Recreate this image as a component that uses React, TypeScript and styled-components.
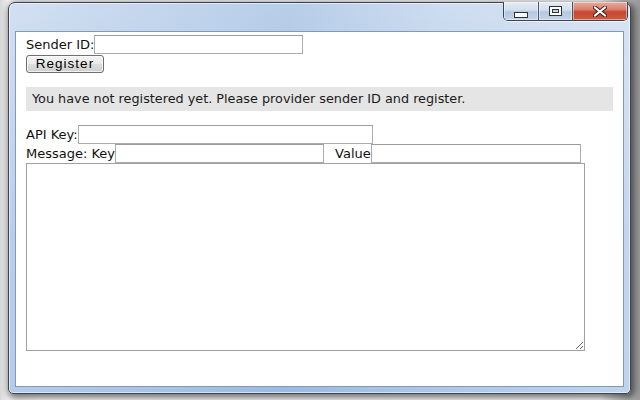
import React from "react";
import styled, { createGlobalStyle } from "styled-components";

const Global = createGlobalStyle`
  html, body { margin: 0; padding: 0; background: #ffffff; }
  body { width: 640px; height: 400px; overflow: hidden; }
`;

const Desktop = styled.div`
  width: 640px;
  height: 400px;
  box-sizing: border-box;
  padding: 2px 0 0 8px;
  background: linear-gradient(90deg, #d8d8d8 0px, #f4f4f4 8px, #ffffff 40px, #ffffff 600px, #9a9a9a 640px);
`;

const Window = styled.div`
  width: 623px;
  height: 392px;
  box-sizing: border-box;
  border: 1px solid #3a4452;
  border-radius: 7px 7px 5px 5px;
  padding: 0 6px 6px;
  display: flex;
  flex-direction: column;
  background:
    linear-gradient(90deg, rgba(255,255,255,0.18) 0%, rgba(120,160,210,0.2) 45%, rgba(255,255,255,0.1) 70%, rgba(255,255,255,0.3) 100%),
    linear-gradient(180deg, #c8d9ee 0%, #b9cfea 30%, #a8c4e7 60%, #a4c1e6 100%);
  box-shadow:
    inset 0 0 0 1px rgba(255, 255, 255, 0.55),
    2px 2px 7px 2px rgba(0, 0, 0, 0.55);
`;

const TitleBar = styled.div`
  height: 28px;
  flex: none;
  display: flex;
  justify-content: flex-end;
  align-items: flex-start;
`;

const CaptionGroup = styled.div`
  display: flex;
  height: 18px;
  margin: -1px -4px 0 0;
  border: 1px solid #3b4250;
  border-top: none;
  border-radius: 0 0 5px 5px;
  overflow: hidden;
  box-shadow: 0 1px 0 rgba(255, 255, 255, 0.6);
`;

const CaptionButton = styled.div<{ $w: number; $close?: boolean }>`
  width: ${(p) => p.$w}px;
  height: 100%;
  display: flex;
  align-items: center;
  justify-content: center;
  box-sizing: border-box;
  border-left: 1px solid #4a5262;
  &:first-child { border-left: none; }
  background: ${(p) =>
    p.$close
      ? "linear-gradient(180deg, #e9ab9c 0%, #d98372 40%, #c5472f 55%, #cf5a40 100%)"
      : "linear-gradient(180deg, #e4ecf6 0%, #d2deed 45%, #b4c7df 55%, #c3d4e9 100%)"};
  box-shadow: inset 0 0 0 1px rgba(255, 255, 255, 0.45);
`;

const Client = styled.div`
  flex: 1;
  background: #ffffff;
  border: 1px solid #8599b4;
  padding: 3px 10px 0 10px;
  display: flex;
  flex-direction: column;
  align-items: flex-start;
  font-family: "DejaVu Sans", Verdana, sans-serif;
  font-size: 13px;
  color: #111;
`;

const FieldRow = styled.div<{ $mt?: number }>`
  display: flex;
  align-items: center;
  height: 19px;
  margin-top: ${(p) => p.$mt ?? 0}px;
`;

const Label = styled.span<{ $ml?: number }>`
  line-height: 15px;
  white-space: pre;
  margin-left: ${(p) => p.$ml ?? 0}px;
`;

const TextInput = styled.input<{ $w: number }>`
  width: ${(p) => p.$w}px;
  height: 19px;
  box-sizing: border-box;
  border: 1px solid #acacac;
  border-top-color: #9c9c9c;
  padding: 0 2px;
  margin: 0;
  outline: none;
  background: #fff;
  font: inherit;
`;

const Button = styled.button`
  margin-top: 1px;
  width: 78px;
  height: 18px;
  box-sizing: border-box;
  padding: 0;
  border: 1px solid #707070;
  border-radius: 3px;
  background: linear-gradient(180deg, #f3f3f3 0%, #ebebeb 48%, #dddddd 52%, #cfcfcf 100%);
  box-shadow: inset 0 0 0 1px rgba(255, 255, 255, 0.7);
  font-family: "Liberation Sans", Arial, sans-serif;
  font-size: 13.5px;
  letter-spacing: 1px;
  color: #000;
  line-height: 16px;
`;

const Notice = styled.div`
  margin-top: 14px;
  width: 587px;
  height: 24px;
  box-sizing: border-box;
  padding-left: 6px;
  background: #e5e5e5;
  line-height: 24px;
  font-size: 12.8px;
  color: #1a1a1a;
`;

const MessageBody = styled.textarea`
  width: 559px;
  height: 188px;
  box-sizing: border-box;
  margin: 0;
  border: 1px solid #a0a0a0;
  outline: none;
  font: inherit;
  resize: both;
`;

const MinIcon = () => (
  <svg width="14" height="6" viewBox="0 0 14 6" style={{ marginTop: 7 }}>
    <rect x="0.5" y="0.5" width="13" height="5" fill="#fff" stroke="#2a3240" />
  </svg>
);

const MaxIcon = () => (
  <svg width="13" height="10" viewBox="0 0 13 10">
    <rect x="0.5" y="0.5" width="12" height="9" fill="#fff" stroke="#2a3240" />
    <rect x="3.5" y="3.5" width="6" height="3" fill="#c8d6e8" stroke="#2a3240" />
  </svg>
);

const CloseIcon = () => (
  <svg width="14" height="11" viewBox="0 0 14 11">
    <path d="M2 1.5 L12 9.5 M12 1.5 L2 9.5" stroke="#3a2020" strokeWidth="4" strokeLinecap="square" />
    <path d="M2 1.5 L12 9.5 M12 1.5 L2 9.5" stroke="#ffffff" strokeWidth="2" strokeLinecap="square" />
  </svg>
);

export default function App() {
  return (
    <Desktop>
      <Global />
      <Window>
        <TitleBar>
          <CaptionGroup>
            <CaptionButton $w={34}>
              <MinIcon />
            </CaptionButton>
            <CaptionButton $w={34}>
              <MaxIcon />
            </CaptionButton>
            <CaptionButton $w={55} $close>
              <CloseIcon />
            </CaptionButton>
          </CaptionGroup>
        </TitleBar>
        <Client>
          <FieldRow>
            <Label>Sender ID:</Label>
            <TextInput $w={209} />
          </FieldRow>
          <Button>Register</Button>
          <Notice>You have not registered yet. Please provider sender ID and register.</Notice>
          <FieldRow $mt={14}>
            <Label>API Key:</Label>
            <TextInput $w={295} />
          </FieldRow>
          <FieldRow>
            <Label>Message: Key</Label>
            <TextInput $w={209} />
            <Label $ml={11}>Value</Label>
            <TextInput $w={210} />
          </FieldRow>
          <MessageBody />
        </Client>
      </Window>
    </Desktop>
  );
}
